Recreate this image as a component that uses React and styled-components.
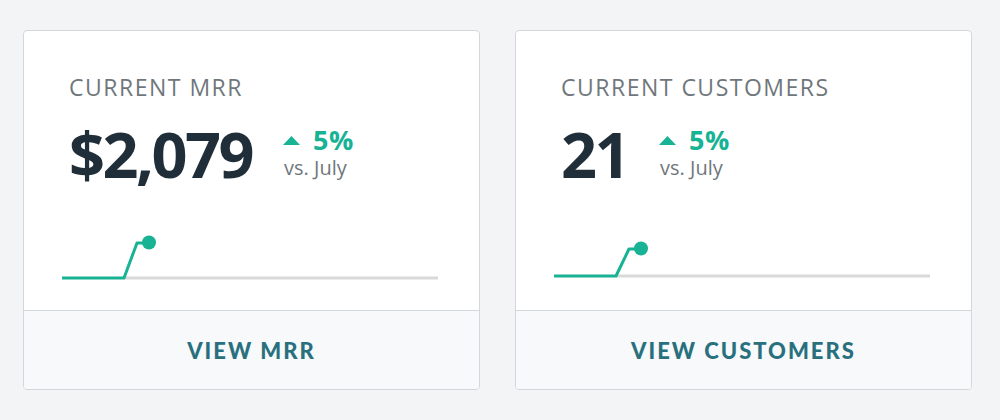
import React from "react";
import styled, { createGlobalStyle } from "styled-components";

const Global = createGlobalStyle`
  html, body { margin: 0; padding: 0; background: #f3f4f6; }
  body { font-family: "Open Sans", "Liberation Sans", sans-serif; }
`;

const Page = styled.div`
  display: grid;
  grid-template-columns: 457px 457px;
  gap: 35px;
  padding: 30px 23px;
`;

const Card = styled.div`
  background: #ffffff;
  border: 1px solid #d3d7da;
  border-radius: 4px;
  display: flex;
  flex-direction: column;
  overflow: hidden;
`;

const Body = styled.div`
  padding: 40px 0 20px 0;
  display: flex;
  flex-direction: column;
`;

const Label = styled.div`
  padding-left: 45px;
  font-size: 23px;
  line-height: 32px;
  letter-spacing: 1.5px;
  color: #6f777c;
  font-weight: 400;
`;

const MetricRow = styled.div`
  padding-left: 45px;
  margin-top: 19px;
  display: flex;
  align-items: flex-start;
  gap: 31px;
`;

const Value = styled.div`
  font-size: 63px;
  line-height: 63px;
  font-weight: 700;
  letter-spacing: -2.5px;
  color: #1f2e39;
`;

const Delta = styled.div`
  margin-top: 3px;
  display: flex;
  flex-direction: column;
`;

const Change = styled.div`
  display: flex;
  align-items: center;
  gap: 13px;
  font-size: 27px;
  line-height: 30px;
  font-weight: 700;
  letter-spacing: 0.5px;
  color: #18b294;
`;

const Compare = styled.div`
  font-size: 20px;
  line-height: 26px;
  color: #6f777c;
  margin-left: 1px;
`;

const Chart = styled.svg`
  display: block;
  margin: 45px 0 0 38px;
  width: 376px;
  height: 60px;
  overflow: visible;
`;

const Footer = styled.a`
  display: flex;
  align-items: center;
  justify-content: center;
  height: 78px;
  border-top: 1px solid #d3d7da;
  background: #f7f9fa;
  font-family: Lato, "Open Sans", sans-serif;
  font-weight: 900;
  font-size: 22px;
  letter-spacing: 2px;
  color: #29707f;
  text-decoration: none;
  cursor: pointer;
`;

const Up = () => (
  <svg width="17" height="9" viewBox="0 0 17 9">
    <path d="M8.5 0 L17 9 L0 9 Z" fill="#18b294" />
  </svg>
);

const Spark = ({ baseY, topY, topX }) => (
  <Chart viewBox="0 0 376 60">
    <line x1="62" y1={baseY} x2="376" y2={baseY} stroke="#d9d9d9" strokeWidth="3" />
    <polyline
      points={`0,${baseY} 62,${baseY} ${topX},${topY} ${topX + 7},${topY}`}
      fill="none"
      stroke="#18b294"
      strokeWidth="3"
      strokeLinejoin="round"
    />
    <circle cx={topX + 12} cy={topY - 0.5} r="7" fill="#18b294" />
  </Chart>
);

const cards = [
  { label: "CURRENT MRR", value: "$2,079", change: "5%", link: "VIEW MRR", baseY: 48, topY: 13, topX: 75 },
  { label: "CURRENT CUSTOMERS", value: "21", change: "5%", link: "VIEW CUSTOMERS", baseY: 46, topY: 19, topX: 75 },
];

export default function App() {
  return (
    <>
      <Global />
      <Page>
        {cards.map((c) => (
          <Card key={c.label}>
            <Body>
              <Label>{c.label}</Label>
              <MetricRow>
                <Value>{c.value}</Value>
                <Delta>
                  <Change>
                    <Up />
                    <span>{c.change}</span>
                  </Change>
                  <Compare>vs. July</Compare>
                </Delta>
              </MetricRow>
              <Spark baseY={c.baseY} topY={c.topY} topX={c.topX} />
            </Body>
            <Footer>{c.link}</Footer>
          </Card>
        ))}
      </Page>
    </>
  );
}
